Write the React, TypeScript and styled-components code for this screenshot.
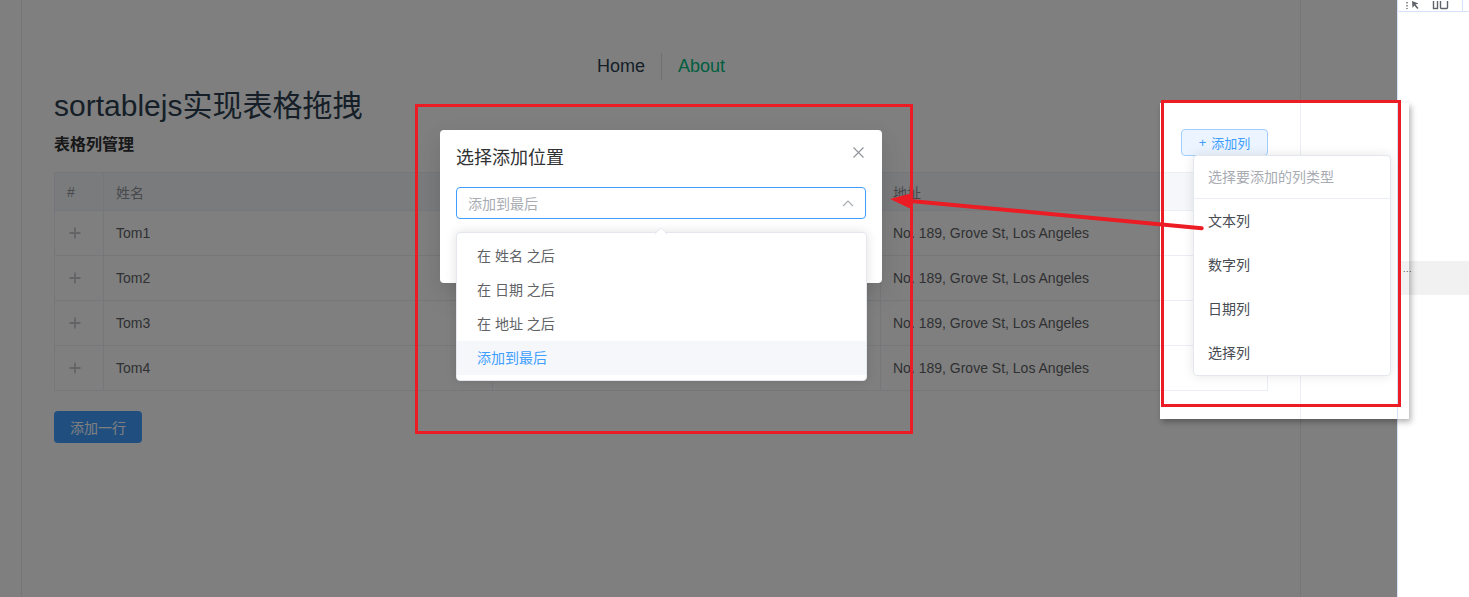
import * as React from "react"
import styled, { createGlobalStyle } from "styled-components"

const GlobalStyle = createGlobalStyle`
  html, body {
    margin: 0;
    padding: 0;
    background: #fff;
  }

  body {
    font-family: "Liberation Sans", "Noto Sans CJK SC", sans-serif;
  }

  * {
    box-sizing: border-box;
  }
`

const RED = "#ec1c24"

const Screen = styled.div`
  position: relative;
  display: flex;
  width: 1469px;
  height: 597px;
  overflow: hidden;
`

const PageArea = styled.div`
  position: relative;
  flex: 0 0 1397px;
  height: 100%;
  background: #fff;
`

const Container = styled.div`
  width: 1280px;
  height: 100%;
  margin-left: 21px;
  padding: 0 32px;
  border-left: 1px solid #ececec;
  border-right: 1px solid #ececec;
`

const Nav = styled.nav`
  display: flex;
  justify-content: center;
  padding-top: 53px;
  font-size: 18px;
  line-height: 27px;
`

const NavLink = styled.a<{ $active?: boolean; $first?: boolean }>`
  padding: 0 16px;
  color: ${props => (props.$active ? "#00bd7e" : "#2c3e50")};
  border-left: ${props => (props.$first ? "none" : "1px solid #dedede")};
  text-decoration: none;
`

const PageTitle = styled.h1`
  margin: 8px 0 0;
  font-size: 30px;
  line-height: 36px;
  font-weight: 400;
  color: #2c3e50;
`

const SectionHeader = styled.div`
  display: flex;
  align-items: center;
  justify-content: space-between;
  height: 27px;
  margin-top: 5px;
`

const SectionTitle = styled.h3`
  margin: 0;
  font-size: 16px;
  font-weight: 700;
  color: #303133;
`

const AddColumnButton = styled.button`
  width: 87px;
  height: 27px;
  padding: 0;
  border: 1px solid #a0cfff;
  border-radius: 4px;
  background: #ecf5ff;
  color: #409eff;
  font-family: inherit;
  font-size: 13px;
  display: flex;
  align-items: center;
  justify-content: center;
  gap: 5px;
`

const Table = styled.div`
  margin-top: 16px;
  border-top: 1px solid #ebeef5;
  border-left: 1px solid #ebeef5;
`

const TableRow = styled.div<{ $head?: boolean }>`
  display: grid;
  grid-template-columns: 49px 389px 388px 387px;
  height: ${props => (props.$head ? 38 : 45)}px;
  background: ${props => (props.$head ? "#f5f7fa" : "#fff")};
  color: ${props => (props.$head ? "#909399" : "#606266")};
`

const Cell = styled.div`
  display: flex;
  align-items: center;
  padding: 0 12px;
  border-right: 1px solid #ebeef5;
  border-bottom: 1px solid #ebeef5;
  font-size: 14px;
  white-space: nowrap;
  overflow: hidden;
`

const Handle = styled.svg`
  margin-left: 2px;
  width: 12px;
  height: 12px;
`

const PrimaryButton = styled.button`
  margin-top: 20px;
  width: 88px;
  height: 32px;
  border: none;
  border-radius: 4px;
  background: #409eff;
  color: #fff;
  font-family: inherit;
  font-size: 14px;
`

const Mask = styled.div`
  position: absolute;
  inset: 0;
  background: rgba(0, 0, 0, 0.5);
`

const Dialog = styled.div`
  position: absolute;
  left: 440px;
  top: 130px;
  width: 442px;
  height: 153px;
  padding: 16px;
  border-radius: 4px;
  background: #fff;
  box-shadow: 0 12px 32px 4px rgba(0, 0, 0, 0.04), 0 8px 20px rgba(0, 0, 0, 0.08);
`

const DialogTitle = styled.div`
  font-size: 18px;
  line-height: 24px;
  color: #303133;
`

const CloseButton = styled.button`
  position: absolute;
  top: 14px;
  right: 16px;
  width: 16px;
  height: 16px;
  padding: 0;
  border: none;
  background: none;
  display: flex;
  align-items: center;
  justify-content: center;
`

const SelectBox = styled.div`
  display: flex;
  align-items: center;
  justify-content: space-between;
  height: 32px;
  margin-top: 17px;
  padding: 0 11px;
  border: 1px solid #409eff;
  border-radius: 4px;
  font-size: 14px;
  color: #a8abb2;
`

const Popper = styled.div`
  position: absolute;
  left: 456px;
  top: 232px;
  width: 411px;
  padding: 6px 0 5px;
  border: 1px solid #e4e7ed;
  border-radius: 4px;
  background: #fff;
  box-shadow: 0 0 12px rgba(0, 0, 0, 0.12);
`

const PopperArrow = styled.div`
  position: absolute;
  top: -4px;
  left: 199px;
  width: 10px;
  height: 10px;
  background: #fff;
  border-top: 1px solid #e4e7ed;
  border-left: 1px solid #e4e7ed;
  border-top-left-radius: 2px;
  transform: rotate(45deg);
`

const Option = styled.div<{ $selected?: boolean }>`
  position: relative;
  height: 34px;
  line-height: 34px;
  padding: 0 20px;
  font-size: 14px;
  color: ${props => (props.$selected ? "#409eff" : "#606266")};
  background: ${props => (props.$selected ? "#f5f7fa" : "transparent")};
`

const DevTools = styled.div`
  flex: 1;
  display: flex;
  flex-direction: column;
  border-left: 1px solid #d6e2fb;
  background: #fff;
`

const DevToolbar = styled.div`
  position: relative;
  display: flex;
  align-items: flex-end;
  height: 12px;
  padding-left: 8px;
  gap: 12px;
  border-bottom: 1px solid #d6e2fb;
  overflow: hidden;
`

const ToolIcon = styled.svg`
  flex: none;
  margin-bottom: 1px;
`

const ToolDivider = styled.div`
  width: 1px;
  height: 12px;
  background: #d6e2fb;
  margin-left: 1px;
`

const ActiveTab = styled.div`
  width: 6px;
  height: 2px;
  margin-left: 2px;
  background: #1a73e8;
`

const DevRow = styled.div<{ $offset: number }>`
  height: 34px;
  margin-top: ${props => props.$offset}px;
  padding: 5px 0 0 5px;
  background: #f1f1f1;
  font-size: 9px;
  line-height: 6px;
  letter-spacing: 0.5px;
  color: #444;
`

const Snapshot = styled.div`
  position: absolute;
  left: 1160px;
  top: 103px;
  width: 249px;
  height: 316px;
  display: flex;
  background: #fff;
  box-shadow: 2px 3px 6px rgba(0, 0, 0, 0.3);
`

const SnapMain = styled.div`
  width: 141px;
  padding: 26px 32px 0 0;
  border-right: 1px solid #ebeef5;
  display: flex;
  flex-direction: column;
  align-items: flex-end;
`

const SnapTable = styled.div`
  width: 100%;
  margin-top: 16px;
  border-top: 1px solid #ebeef5;
  border-right: 1px solid #ebeef5;
`

const SnapRow = styled.div<{ $head?: boolean }>`
  height: ${props => (props.$head ? 38 : 45)}px;
  border-bottom: 1px solid #ebeef5;
  background: ${props => (props.$head ? "#f5f7fa" : "#fff")};
`

const SnapRest = styled.div`
  flex: 1;
`

const DevStrip = styled.div`
  width: 12px;
  border-left: 1px solid #d6e2fb;
`

const ColumnMenu = styled.div`
  position: absolute;
  left: 33px;
  top: 52px;
  width: 198px;
  border: 1px solid #e4e7ed;
  border-radius: 4px;
  background: #fff;
  box-shadow: 0 0 12px rgba(0, 0, 0, 0.1);
`

const MenuHeader = styled.div`
  height: 43px;
  line-height: 42px;
  padding: 0 14px;
  border-bottom: 1px solid #ebeef5;
  font-size: 14px;
  color: #a8abb2;
`

const MenuItem = styled.div`
  height: 44px;
  line-height: 44px;
  padding: 0 14px;
  font-size: 14px;
  color: #474b52;
`

const RedBox = styled.div<{ $x: number; $y: number; $w: number; $h: number }>`
  position: absolute;
  left: ${props => props.$x}px;
  top: ${props => props.$y}px;
  width: ${props => props.$w}px;
  height: ${props => props.$h}px;
  border: 3px solid ${RED};
`

const ArrowSvg = styled.svg`
  position: absolute;
  left: 880px;
  top: 185px;
`

type RowData = {
    key: string
    name: string
    address: string
}

const rows: RowData[] = [
    { key: "1", name: "Tom1", address: "No. 189, Grove St, Los Angeles" },
    { key: "2", name: "Tom2", address: "No. 189, Grove St, Los Angeles" },
    { key: "3", name: "Tom3", address: "No. 189, Grove St, Los Angeles" },
    { key: "4", name: "Tom4", address: "No. 189, Grove St, Los Angeles" },
]

const positions = ["在 姓名 之后", "在 日期 之后", "在 地址 之后", "添加到最后"]

const columnTypes = ["文本列", "数字列", "日期列", "选择列"]

const PlusHandle = () => (
    <Handle viewBox="0 0 12 12">
        <path d="M6 0.5v11M0.5 6h11" stroke="#c8c9cc" strokeWidth="1.8" fill="none" />
    </Handle>
)

const AddColumn = () => (
    <AddColumnButton>
        <span>+</span>
        <span>添加列</span>
    </AddColumnButton>
)

const DevToolsPanel = () => (
    <DevTools>
        <DevToolbar>
            {/* inspect element icon, cut off at the top */}
            <ToolIcon width="14" height="9" viewBox="0 6 14 9">
                <path d="M1 7v1.5M1 10v1.5M1 13v1" stroke="#5f6368" strokeWidth="1.3" />
                <path d="M6 6l6.5 2.5-3 1 3 3.5-1.2 1-3-3.5-1.8 2.5z" fill="#5f6368" />
            </ToolIcon>
            {/* device toolbar icon, cut off at the top */}
            <ToolIcon width="17" height="9" viewBox="0 6 17 9">
                <rect x="1.5" y="0" width="4" height="13.5" fill="none" stroke="#5f6368" strokeWidth="1.4" />
                <rect x="8.5" y="3" width="7" height="10.5" rx="1" fill="none" stroke="#5f6368" strokeWidth="1.4" />
            </ToolIcon>
            <ToolDivider />
            <ActiveTab />
        </DevToolbar>
        <DevRow $offset={249} />
    </DevTools>
)

export default function App() {
    return (
        <>
            <GlobalStyle />
            <Screen>
                <PageArea>
                    <Container>
                        <Nav>
                            <NavLink $first>Home</NavLink>
                            <NavLink $active>About</NavLink>
                        </Nav>
                        <PageTitle>sortablejs实现表格拖拽</PageTitle>
                        <SectionHeader>
                            <SectionTitle>表格列管理</SectionTitle>
                            <AddColumn />
                        </SectionHeader>
                        {/* the date column sits under the dialog, so its texts are not shown */}
                        <Table>
                            <TableRow $head>
                                <Cell>#</Cell>
                                <Cell>姓名</Cell>
                                <Cell />
                                <Cell>地址</Cell>
                            </TableRow>
                            {rows.map(row => (
                                <TableRow key={row.key}>
                                    <Cell>
                                        <PlusHandle />
                                    </Cell>
                                    <Cell>{row.name}</Cell>
                                    <Cell />
                                    <Cell>{row.address}</Cell>
                                </TableRow>
                            ))}
                        </Table>
                        <PrimaryButton>添加一行</PrimaryButton>
                    </Container>

                    <Mask />

                    <Dialog>
                        <DialogTitle>选择添加位置</DialogTitle>
                        <CloseButton>
                            <svg width="11" height="11" viewBox="0 0 11 11">
                                <path d="M0.5 0.5l10 10M10.5 0.5l-10 10" stroke="#909399" strokeWidth="1.1" />
                            </svg>
                        </CloseButton>
                        <SelectBox>
                            <span>添加到最后</span>
                            <svg width="12" height="7" viewBox="0 0 12 7">
                                <path d="M1 6l5-5 5 5" stroke="#a8abb2" strokeWidth="1.2" fill="none" />
                            </svg>
                        </SelectBox>
                    </Dialog>

                    <Popper>
                        <PopperArrow />
                        {positions.map(label => (
                            <Option key={label} $selected={label === "添加到最后"}>
                                {label}
                            </Option>
                        ))}
                    </Popper>
                </PageArea>

                <DevToolsPanel />

                {/* pasted snapshot of the add-column dropdown */}
                <Snapshot>
                    <SnapMain>
                        <AddColumn />
                        <SnapTable>
                            <SnapRow $head />
                            {rows.map(row => (
                                <SnapRow key={row.key} />
                            ))}
                        </SnapTable>
                    </SnapMain>
                    <SnapRest />
                    <DevStrip>
                        <DevRow $offset={158}>...</DevRow>
                    </DevStrip>
                    <ColumnMenu>
                        <MenuHeader>选择要添加的列类型</MenuHeader>
                        {columnTypes.map(type => (
                            <MenuItem key={type}>{type}</MenuItem>
                        ))}
                    </ColumnMenu>
                </Snapshot>

                <RedBox $x={415} $y={104} $w={498} $h={330} />
                <RedBox $x={1161} $y={100} $w={240} $h={307} />

                <ArrowSvg width="330" height="55" viewBox="0 0 330 55">
                    <line x1="321.7" y1="43.3" x2="28" y2="15.7" stroke={RED} strokeWidth="4" strokeLinecap="round" />
                    <polygon points="10,14 32.6,8 31.2,24" fill={RED} />
                </ArrowSvg>
            </Screen>
        </>
    )
}
